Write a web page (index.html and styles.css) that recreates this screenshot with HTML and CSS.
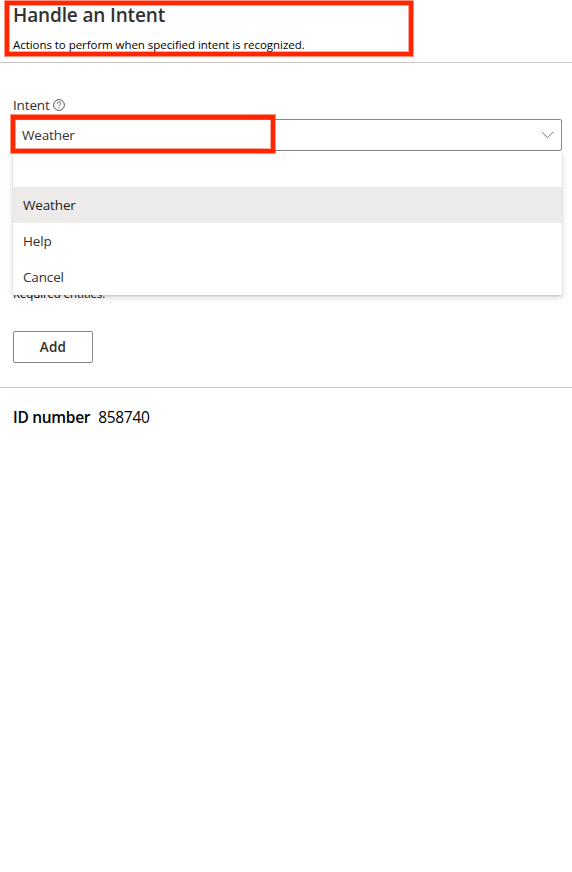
FILE: index.html
```html
<!DOCTYPE html>
<html lang="en">
<head>
<meta charset="utf-8">
<title>Handle an Intent</title>
<link rel="stylesheet" href="styles.css">
</head>
<body>
<main class="panel">
  <header class="header">
    <h1 class="title"><span>Handle an Intent</span></h1>
    <p class="description"><span>Actions to perform when specified intent is recognized.</span></p>
    <div class="highlight highlight-header"></div>
  </header>
  <section class="form">
    <div class="label">
      <span class="label-text">Intent</span>
      <svg class="help" viewBox="0 0 12 12" width="12" height="12" fill="none" stroke="#444" stroke-width=".9"><circle cx="6" cy="6" r="5.4"/><path d="M4.3 4.8C4.3 2.4 7.7 2.4 7.7 4.6C7.7 5.8 6 5.8 6 7.3M6 8.2V9.1"/></svg>
    </div>
    <div class="field">
      <div class="select">
        <span class="select-text">Weather</span>
        <svg class="chevron" viewBox="0 0 13 8" width="13" height="8" fill="none" stroke="#777"><path d="M.8 1L6.5 6.7L12.2 1"/></svg>
      </div>
      <div class="menu">
        <div class="option"></div>
        <div class="option selected"><span>Weather</span></div>
        <div class="option"><span>Help</span></div>
        <div class="option"><span>Cancel</span></div>
      </div>
      <div class="highlight highlight-field"></div>
    </div>
    <p class="required"><span>Required entities:</span></p>
    <button class="add"><span>Add</span></button>
  </section>
  <footer class="footer"><strong class="id-label">ID number</strong><span class="id-value">858740</span></footer>
</main>
</body>
</html>
```
FILE: styles.css
```css
* { box-sizing: border-box; }
body {
  margin: 0;
  background: #fff;
  color: #000;
  font-family: "Open Sans", "Noto Sans", sans-serif;
}
.panel { width: 572px; height: 872px; overflow: hidden; }
.header {
  position: relative;
  height: 63px;
  padding: 2px 13px 0;
  border-bottom: 1px solid #c8c6c4;
}
.title {
  margin: 0;
  font-size: 19px;
  line-height: 26px;
  font-weight: 600;
  letter-spacing: -.14px;
  color: #323130;
}
.description { margin: 9px 0 0; font-size: 11.5px; line-height: 16px; letter-spacing: -.05px; }
.highlight {
  position: absolute;
  z-index: 3;
  border: 4px solid #ff2600;
  box-shadow: 0 0 0 1px rgba(255, 38, 0, .5), inset 0 0 0 1px rgba(255, 38, 0, .4);
  pointer-events: none;
}
.highlight-header { left: 5px; top: 1px; width: 408px; height: 55px; }
.highlight-field { left: -2px; top: -4px; width: 264px; height: 38px; }
.form { height: 325px; padding: 32px 10px 0 13px; border-bottom: 1px solid #c8c6c4; }
.label {
  display: flex;
  align-items: center;
  gap: 3px;
  height: 20px;
  font-size: 13.5px;
  letter-spacing: -.15px;
  color: #323130;
}
.field { position: relative; margin-top: 4px; }
.select {
  display: flex;
  align-items: center;
  justify-content: space-between;
  height: 32px;
  padding: 0 7px 0 8px;
  border: 1px solid #8a8886;
  border-radius: 2px;
  font-size: 13.5px;
  letter-spacing: -.15px;
  color: #323130;
}
.menu {
  position: absolute;
  z-index: 2;
  top: 32px;
  left: 0;
  width: 549px;
  background: #fff;
  box-shadow: 0 3px 7px rgba(0, 0, 0, .13), 0 1px 2px rgba(0, 0, 0, .15);
}
.option {
  display: flex;
  align-items: center;
  height: 36px;
  padding: 0 10px;
  font-size: 13.5px;
  letter-spacing: -.15px;
  color: #323130;
}
.selected { background: #edebe9; color: #201f1e; }
.required { margin: 135px 0 0; font-size: 11.5px; line-height: 16px; letter-spacing: -.12px; }
.add {
  display: block;
  width: 80px;
  height: 32px;
  margin-top: 29px;
  padding: 0;
  border: 1px solid #8a8886;
  border-radius: 2px;
  background: #fff;
  font: 600 13.5px "Open Sans", sans-serif;
  letter-spacing: .2px;
  color: #323130;
}
.footer {
  display: flex;
  align-items: center;
  gap: 8px;
  height: 58px;
  padding: 0 13px;
  font-size: 15.5px;
  letter-spacing: -.3px;
}
.id-label { font-weight: 600; }
```
